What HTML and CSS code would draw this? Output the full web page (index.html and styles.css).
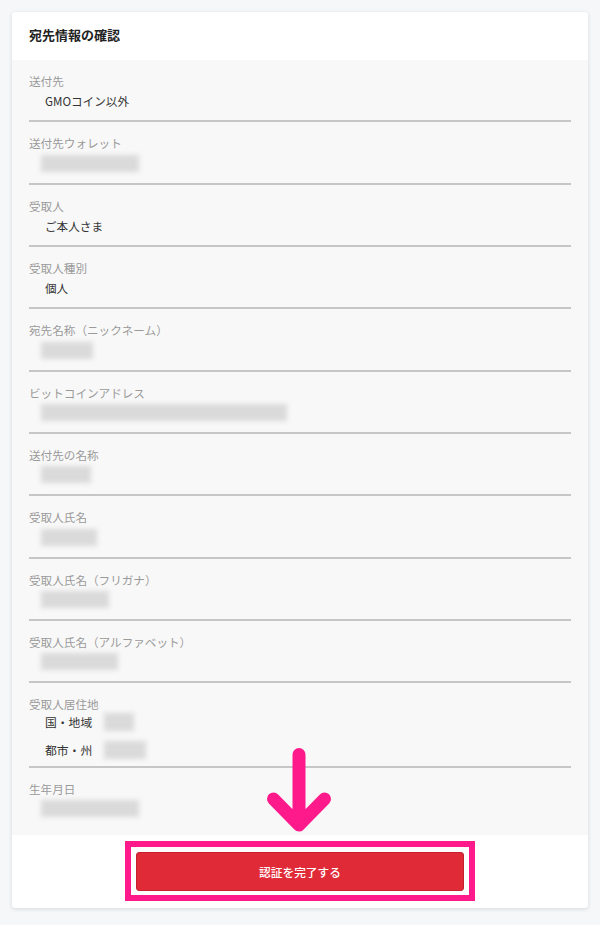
FILE: index.html
```html
<!DOCTYPE html>
<html lang="ja">
<head>
<meta charset="utf-8">
<title>宛先情報の確認</title>
<link rel="stylesheet" href="styles.css">
</head>
<body>
<div class="card">
  <div class="card-header">宛先情報の確認</div>
  <div class="card-body">
    <div class="row">
      <div class="label">送付先</div>
      <div class="value">GMOコイン以外</div>
    </div>
    <div class="row">
      <div class="label">送付先ウォレット</div>
      <div class="value"><span class="blur w-wallet"></span></div>
    </div>
    <div class="row">
      <div class="label">受取人</div>
      <div class="value">ご本人さま</div>
    </div>
    <div class="row">
      <div class="label">受取人種別</div>
      <div class="value">個人</div>
    </div>
    <div class="row">
      <div class="label">宛先名称（ニックネーム）</div>
      <div class="value"><span class="blur w-nick"></span></div>
    </div>
    <div class="row">
      <div class="label">ビットコインアドレス</div>
      <div class="value"><span class="blur w-addr"></span></div>
    </div>
    <div class="row">
      <div class="label">送付先の名称</div>
      <div class="value"><span class="blur w-dest"></span></div>
    </div>
    <div class="row">
      <div class="label">受取人氏名</div>
      <div class="value"><span class="blur w-name"></span></div>
    </div>
    <div class="row">
      <div class="label">受取人氏名（フリガナ）</div>
      <div class="value"><span class="blur w-kana"></span></div>
    </div>
    <div class="row">
      <div class="label">受取人氏名（アルファベット）</div>
      <div class="value"><span class="blur w-alpha"></span></div>
    </div>
    <div class="row row-address">
      <div class="label">受取人居住地</div>
      <div class="sub-list">
        <div class="sub-row">
          <div class="sub-label">国・地域</div>
          <span class="blur sub-blur w-country"></span>
        </div>
        <div class="sub-row">
          <div class="sub-label">都市・州</div>
          <span class="blur sub-blur w-city"></span>
        </div>
      </div>
    </div>
    <div class="row row-last">
      <div class="label">生年月日</div>
      <div class="value value-last"><span class="blur w-birth"></span></div>
    </div>
  </div>
  <div class="card-footer">
    <div class="highlight">
      <button class="btn-submit" type="button">認証を完了する</button>
    </div>
  </div>
  <svg class="arrow" width="74" height="100" viewBox="0 0 74 100" aria-hidden="true">
    <path d="M37 14.5 L37 85 M11.5 59 L37 85 L62.5 59" fill="none" stroke="#ff1a8c" stroke-width="13" stroke-linecap="round" stroke-linejoin="round"/>
  </svg>
</div>
</body>
</html>
```

FILE: styles.css
```css
html, body {
  margin: 0;
  padding: 0;
}
body {
  background: #f6f7f9;
  padding: 12px;
  font-family: "Noto Sans CJK JP", "Noto Sans", sans-serif;
  color: #333;
}
.card {
  position: relative;
  width: 576px;
  background: #fff;
  border-radius: 3px;
  box-shadow: 0 1px 4px rgba(0, 0, 0, 0.13);
}
.card-header {
  height: 48px;
  box-sizing: border-box;
  padding: 14px 17px 0;
  font-size: 13px;
  line-height: 18px;
  font-weight: bold;
  color: #222;
}
.card-body {
  background: #f8f8f8;
  padding: 0 17px;
}
.row {
  padding: 12px 0 9.33px;
  border-bottom: 2px solid #c6c6c6;
}
.label {
  font-size: 11.6px;
  line-height: 18px;
  color: #9a9a9a;
}
.value {
  margin-top: 1px;
  padding-left: 16px;
  height: 20px;
  font-size: 11.6px;
  line-height: 20px;
  color: #333;
  display: flex;
  align-items: center;
}
.blur {
  display: inline-block;
  height: 17px;
  margin-left: -4px;
  background: #dadada;
  filter: blur(2.5px);
}
.w-wallet { width: 98px; }
.w-nick { width: 52px; }
.w-addr { width: 246px; }
.w-dest { width: 50px; }
.w-name { width: 56px; }
.w-kana { width: 68px; }
.w-alpha { width: 77px; }
.w-birth { width: 98px; }
.row-address {
  padding-bottom: 6px;
}
.sub-list {
  margin-top: -2px;
  padding-left: 16px;
  display: flex;
  flex-direction: column;
  gap: 7px;
}
.sub-row {
  height: 21px;
  display: flex;
  align-items: center;
  font-size: 11.8px;
  color: #333;
}
.sub-label {
  width: 63px;
}
.sub-blur {
  height: 18px;
}
.w-country { width: 30px; }
.w-city { width: 42px; }
.row-last {
  border-bottom: none;
  padding-bottom: 16.33px;
}
.value-last {
  margin-top: 0;
}
.card-footer {
  padding: 6px 0 7.5px;
  display: flex;
  justify-content: center;
  border-radius: 0 0 3px 3px;
}
.highlight {
  width: 350px;
  box-sizing: border-box;
  border: 6px solid #ff1a8c;
  padding: 5px 5px 4px;
  background: #fff;
}
.btn-submit {
  display: block;
  width: 100%;
  height: 39px;
  margin: 0;
  border: 1px solid #c71f2d;
  border-radius: 3px;
  background: #e12a38;
  color: #fff;
  font-family: "Noto Sans CJK JP", "Noto Sans", sans-serif;
  font-size: 11.7px;
  font-weight: 500;
  cursor: pointer;
}
.arrow {
  position: absolute;
  left: 250px;
  top: 728px;
}
```
